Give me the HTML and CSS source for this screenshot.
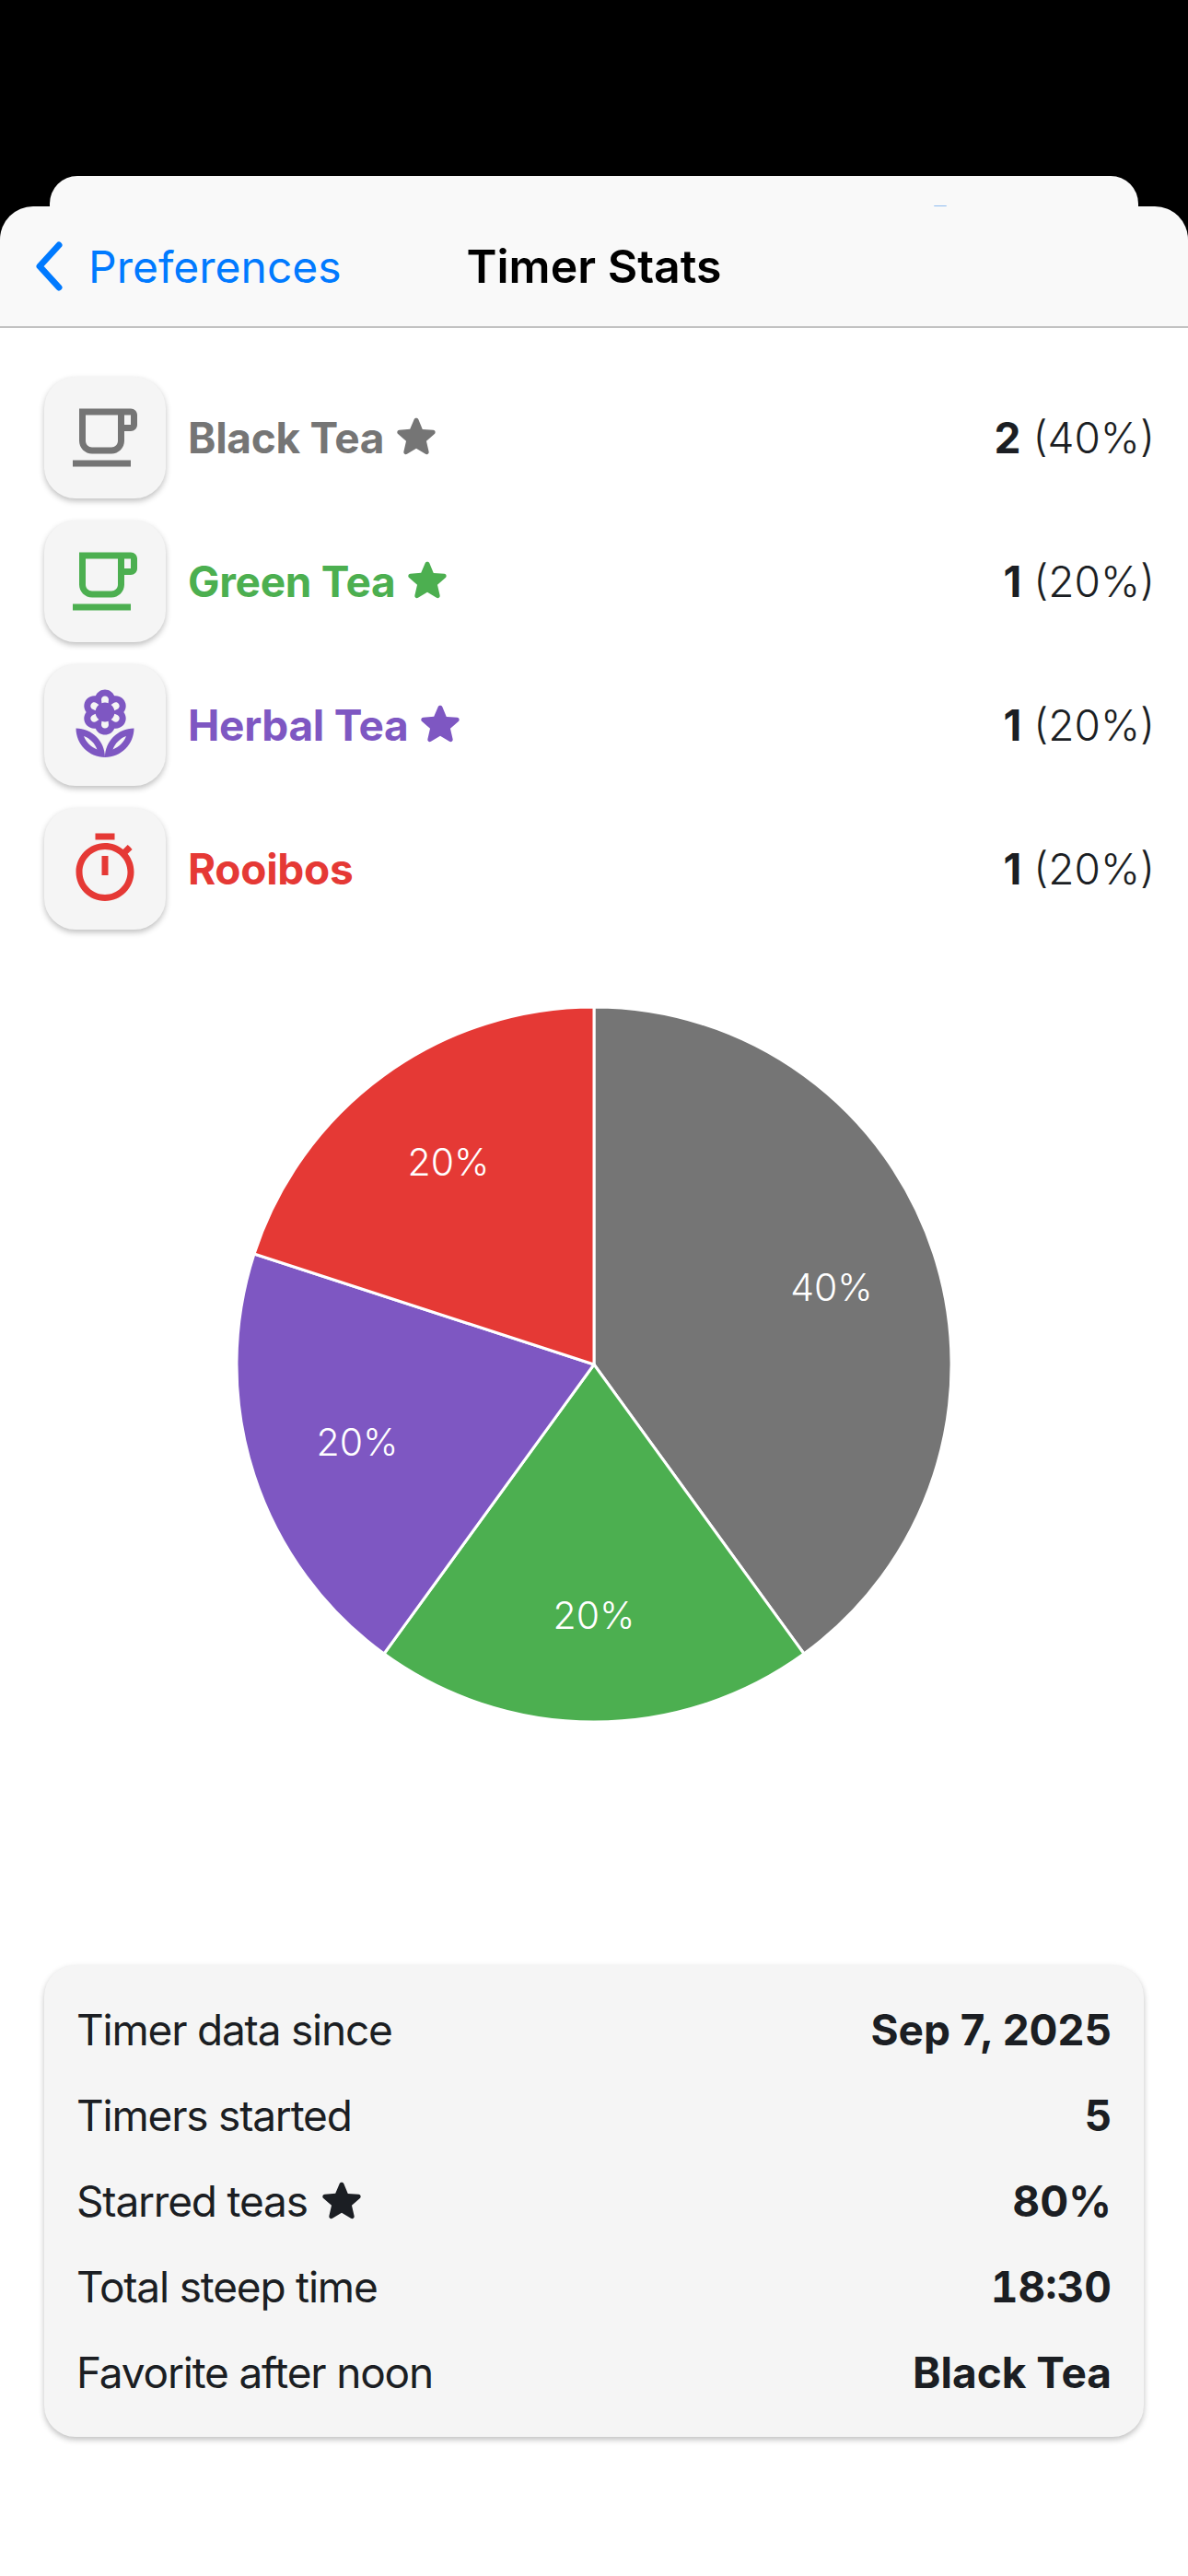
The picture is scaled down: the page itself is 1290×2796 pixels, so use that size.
FILE: index.html
```html
<!DOCTYPE html>
<html lang="en">
<head>
  <meta charset="UTF-8" />
  <meta name="viewport" content="width=device-width, initial-scale=1.0" />
  <title>Timer Stats</title>
  <link rel="stylesheet" href="styles.css">
</head>
<body>
  <svg class="iconDefs" width="0" height="0" aria-hidden="true">
    <symbol id="star" viewBox="0 0 24 24">
      <path d="M12 17.27l4.15 2.51c.76.46 1.69-.22 1.49-1.08l-1.1-4.72 3.67-3.18c.67-.58.31-1.68-.57-1.75l-4.83-.41-1.89-4.46c-.34-.81-1.5-.81-1.84 0L9.19 8.63l-4.83.41c-.88.07-1.24 1.17-.57 1.75l3.67 3.18-1.1 4.72c-.2.86.73 1.54 1.49 1.08l4.15-2.5z" />
    </symbol>
    <symbol id="cup" viewBox="0 0 24 24">
      <path d="M2 19h18v2H2zM20 3H4v10c0 2.21 1.79 4 4 4h6c2.21 0 4-1.79 4-4v-3h2c1.11 0 2-.9 2-2V5c0-1.11-.89-2-2-2zm-4 10c0 1.1-.9 2-2 2H8c-1.1 0-2-.9-2-2V5h10v8zm4-5h-2V5h2v3z" />
    </symbol>
    <symbol id="flower" viewBox="0 0 24 24">
      <path d="M8.66 13.07c.15 0 .29-.01.43-.03C9.56 14.19 10.69 15 12 15s2.44-.81 2.91-1.96c.14.02.28.03.43.03 1.73 0 3.14-1.41 3.14-3.14 0-.71-.25-1.39-.67-1.93.43-.54.67-1.22.67-1.93 0-1.73-1.41-3.14-3.14-3.14-.15 0-.29.01-.43.03C14.44 1.81 13.31 1 12 1s-2.44.81-2.91 1.96c-.14-.02-.28-.03-.43-.03-1.73 0-3.14 1.41-3.14 3.14 0 .71.25 1.39.67 1.93-.43.54-.68 1.22-.68 1.93 0 1.73 1.41 3.14 3.15 3.14zM12 13c-.62 0-1.12-.49-1.14-1.1l.12-1.09c.32.12.66.19 1.02.19s.71-.07 1.03-.19l.11 1.09c-.02.61-.52 1.1-1.14 1.1zm3.34-1.93c-.24 0-.46-.07-.64-.2l-.81-.57c.55-.45.94-1.09 1.06-1.83l.88.42c.4.19.66.59.66 1.03 0 .64-.52 1.15-1.15 1.15zm-.65-5.94c.2-.13.42-.2.65-.2.63 0 1.14.51 1.14 1.14 0 .44-.25.83-.66 1.03l-.88.42c-.12-.74-.51-1.38-1.07-1.83l.82-.56zM12 3c.62 0 1.12.49 1.14 1.1l-.11 1.09C12.71 5.07 12.36 5 12 5s-.7.07-1.02.19l-.12-1.09c.02-.61.52-1.1 1.14-1.1zM8.66 4.93c.24 0 .46.07.64.2l.81.56c-.55.45-.94 1.09-1.06 1.83l-.88-.42c-.4-.2-.66-.59-.66-1.03 0-.63.52-1.14 1.15-1.14zM8.17 8.9l.88-.42c.12.74.51 1.38 1.07 1.83l-.81.55c-.2.13-.42.2-.65.2-.63 0-1.14-.51-1.14-1.14-.01-.43.25-.82.65-1.02zM12 22c4.97 0 9-4.03 9-9-4.97 0-9 4.03-9 9zm2.44-2.44c.71-1.9 2.22-3.42 4.12-4.12-.71 1.9-2.22 3.41-4.12 4.12zM3 13c0 4.97 4.03 9 9 9 0-4.97-4.03-9-9-9zm2.44 2.44c1.9.71 3.42 2.22 4.12 4.12-1.9-.71-3.41-2.22-4.12-4.12z" />
    </symbol>
    <symbol id="timer" viewBox="0 0 24 24">
      <path d="M15 1H9v2h6V1zm-4 13h2V8h-2v6zm8.03-6.61l1.42-1.42c-.43-.51-.9-.99-1.41-1.41l-1.42 1.42C16.07 4.74 14.12 4 12 4c-4.97 0-9 4.03-9 9s4.02 9 9 9 9-4.03 9-9c0-2.12-.74-4.07-1.97-5.61zM12 20c-3.87 0-7-3.13-7-7s3.13-7 7-7 7 3.13 7 7-3.13 7-7 7z" />
    </symbol>
  </svg>

  <div class="top">
    <div class="sheetBehind"><span class="sheetPeek"></span></div>
    <header class="navbar">
      <a class="backLink">
        <svg class="chevron" viewBox="0 0 32 54">
          <path d="M27 4 6 27l21 23" />
        </svg>
        <span>Preferences</span>
      </a>
      <h1 class="navTitle">Timer Stats</h1>
    </header>
  </div>

  <main>
    <ul class="teaList">
      <li class="teaRow black">
        <div class="teaTile"><svg class="teaIcon"><use href="#cup" /></svg></div>
        <span class="teaName">Black Tea</span>
        <svg class="star"><use href="#star" /></svg>
        <span class="teaCount"><b>2</b> (40%)</span>
      </li>
      <li class="teaRow green">
        <div class="teaTile"><svg class="teaIcon"><use href="#cup" /></svg></div>
        <span class="teaName">Green Tea</span>
        <svg class="star"><use href="#star" /></svg>
        <span class="teaCount"><b>1</b> (20%)</span>
      </li>
      <li class="teaRow herbal">
        <div class="teaTile"><svg class="teaIcon"><use href="#flower" /></svg></div>
        <span class="teaName">Herbal Tea</span>
        <svg class="star"><use href="#star" /></svg>
        <span class="teaCount"><b>1</b> (20%)</span>
      </li>
      <li class="teaRow rooibos">
        <div class="teaTile"><svg class="teaIcon"><use href="#timer" /></svg></div>
        <span class="teaName">Rooibos</span>
        <span class="teaCount"><b>1</b> (20%)</span>
      </li>
    </ul>

    <svg class="pie" viewBox="0 0 780 780">
      <path class="slice black" d="M390 390 390 2A388 388 0 0 1 618 704Z" />
      <path class="slice green" d="M390 390 618 704A388 388 0 0 1 162 704Z" />
      <path class="slice herbal" d="M390 390 162 704A388 388 0 0 1 21 270Z" />
      <path class="slice rooibos" d="M390 390 21 270A388 388 0 0 1 390 2Z" />
      <text class="pieLabel" x="648" y="306">40%</text>
      <text class="pieLabel" x="390" y="662">20%</text>
      <text class="pieLabel" x="133" y="474">20%</text>
      <text class="pieLabel" x="232" y="170">20%</text>
    </svg>

    <section class="summary">
      <div class="summaryRow"><span>Timer data since</span><b>Sep 7, 2025</b></div>
      <div class="summaryRow"><span>Timers started</span><b>5</b></div>
      <div class="summaryRow">
        <span class="starred">Starred teas <svg class="star"><use href="#star" /></svg></span>
        <b>80%</b>
      </div>
      <div class="summaryRow"><span>Total steep time</span><b class="steepTime">18:30</b></div>
      <div class="summaryRow"><span>Favorite after noon</span><b>Black Tea</b></div>
    </section>
  </main>
</body>
</html>
```

FILE: styles.css
```css
* {
  box-sizing: border-box;
}

body {
  margin: 0;
  width: 1290px;
  height: 2796px;
  overflow: hidden;
  background-color: #fff;
  font-family: Inter, "Liberation Sans", sans-serif;
  color: #1b1e23;
}

.iconDefs {
  position: absolute;
}

.top {
  background-color: #000;
  padding-top: 191px;
}

.sheetBehind {
  position: relative;
  height: 33px;
  margin: 0 54px;
  background-color: #f9f9f9;
  border-radius: 30px 30px 0 0;
}

.sheetPeek {
  position: absolute;
  left: 960px;
  bottom: 0;
  width: 14px;
  height: 1px;
  background-color: #8dbcf0;
  border-radius: 7px 7px 0 0;
}

.navbar {
  display: grid;
  grid-template-columns: 1fr auto 1fr;
  align-items: center;
  height: 132px;
  background-color: #f9f9f9;
  border-radius: 36px 36px 0 0;
  border-bottom: 2px solid #c2c2c2;
}

.backLink {
  display: flex;
  align-items: center;
  gap: 27px;
  padding-left: 37px;
  font-size: 48px;
  color: #007aff;
}

.chevron {
  width: 32px;
  height: 54px;
  fill: none;
  stroke: #007aff;
  stroke-width: 7;
  stroke-linecap: round;
  stroke-linejoin: round;
}

.navTitle {
  margin: 0;
  font-size: 50px;
  font-weight: 600;
  color: #000;
}

.teaList {
  display: flex;
  flex-direction: column;
  gap: 24px;
  margin: 0;
  padding: 53px 36px 0 48px;
  list-style: none;
}

.teaRow {
  display: flex;
  align-items: center;
  height: 132px;
}

.teaTile {
  display: flex;
  justify-content: center;
  align-items: center;
  width: 132px;
  height: 132px;
  margin-right: 24px;
  background-color: #f5f5f5;
  border-radius: 34px;
  box-shadow: 0 3px 6px rgba(0, 0, 0, 0.25);
}

.teaIcon {
  width: 84px;
  height: 84px;
  fill: currentColor;
}

.teaName {
  font-size: 46px;
  font-weight: 650;
  letter-spacing: -0.3px;
}

.star {
  width: 58px;
  height: 58px;
  fill: currentColor;
}

.teaRow .star {
  margin-left: 6px;
  margin-top: -3px;
}

.teaCount {
  margin-left: auto;
  font-size: 46px;
  font-weight: 300;
  color: #1b1e23;
}

.teaCount b {
  font-weight: 700;
}

.black {
  color: #757575;
  fill: #757575;
}

.green {
  color: #4caf50;
  fill: #4caf50;
}

.herbal {
  color: #7e57c2;
  fill: #7e57c2;
}

.rooibos {
  color: #e53935;
  fill: #e53935;
}

.pie {
  display: block;
  width: 780px;
  height: 780px;
  margin: 82px auto 0;
}

.slice {
  stroke: #fff;
  stroke-width: 3;
  stroke-linejoin: round;
}

.pieLabel {
  fill: #fff;
  font-size: 41px;
  font-weight: 300;
  text-anchor: middle;
  dominant-baseline: central;
}

.summary {
  margin: 262px 48px 0;
  padding: 23px 35px 24px;
  background-color: #f5f5f5;
  border-radius: 34px;
  box-shadow: 0 3px 6px rgba(0, 0, 0, 0.25);
}

.summaryRow {
  display: flex;
  justify-content: space-between;
  align-items: center;
  height: 93px;
  font-size: 46px;
  font-weight: 400;
  letter-spacing: -1.2px;
}

.summaryRow b {
  font-weight: 700;
  letter-spacing: 0;
}

.summaryRow .steepTime {
  font-variant-numeric: tabular-nums;
}

.starred {
  display: flex;
  align-items: center;
  gap: 8px;
}
```
